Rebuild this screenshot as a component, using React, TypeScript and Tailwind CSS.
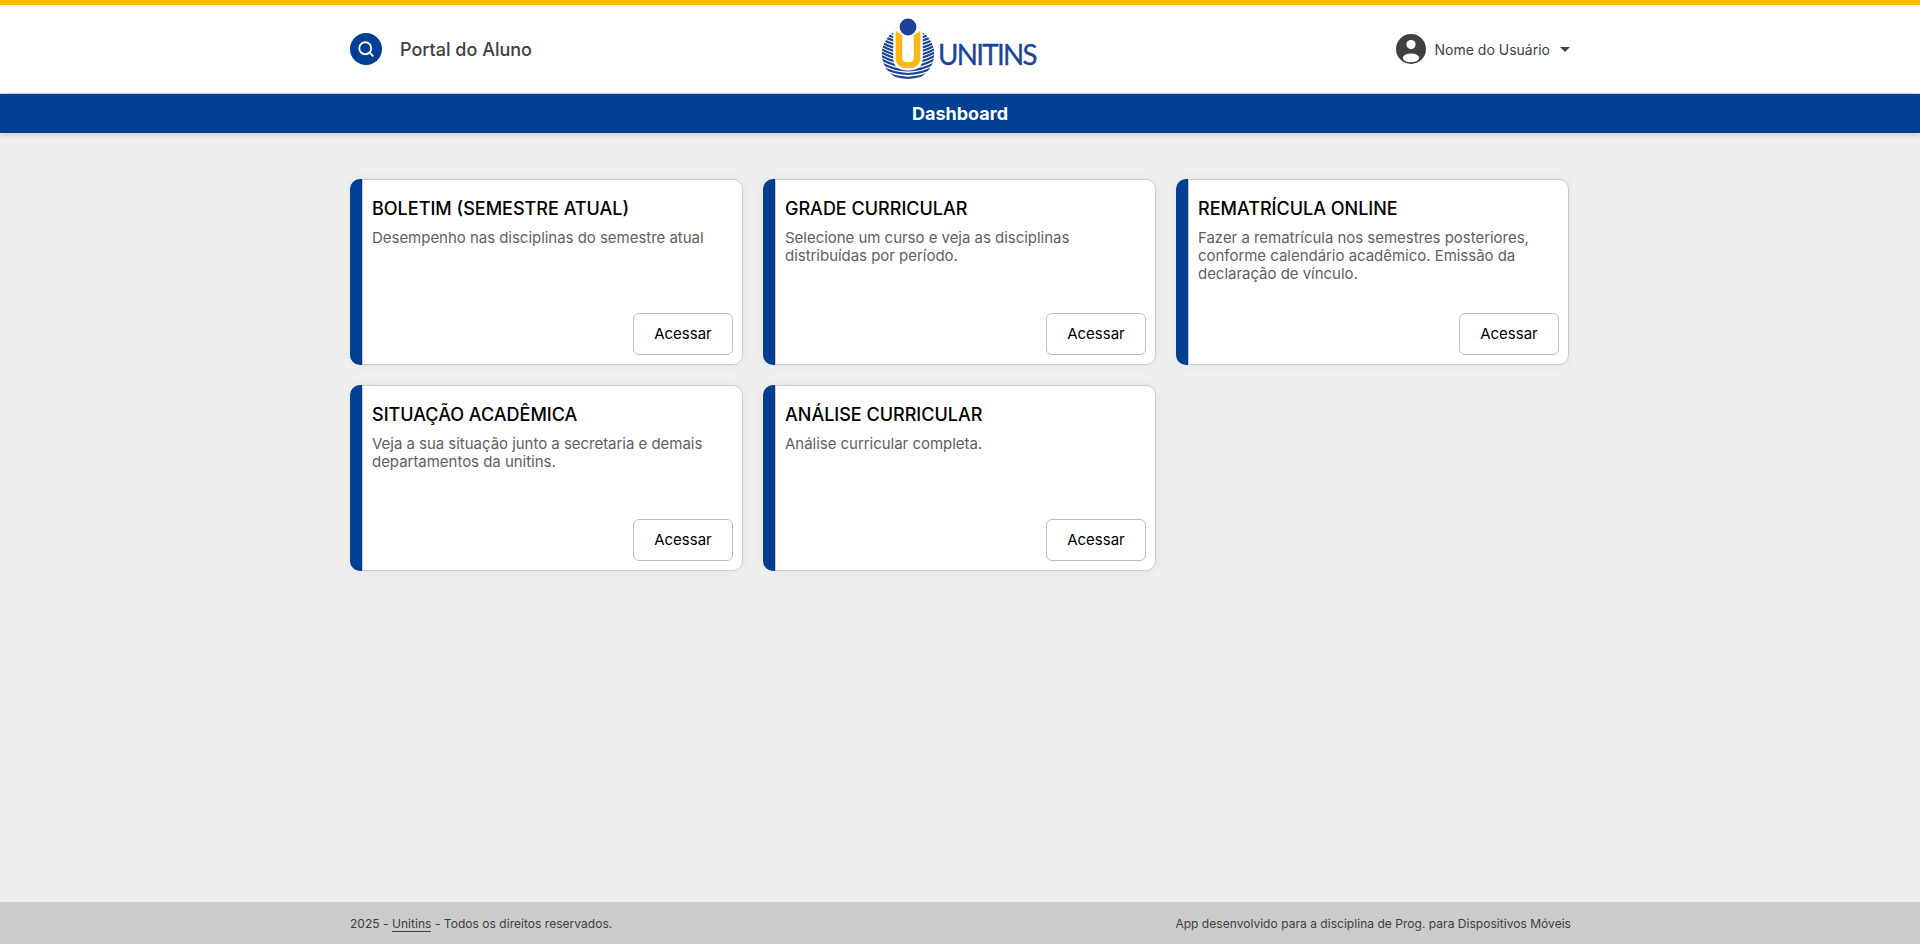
import { Search } from "lucide-react";

const cards = [
  { title: "BOLETIM (SEMESTRE ATUAL)", text: "Desempenho nas disciplinas do semestre atual" },
  { title: "GRADE CURRICULAR", text: "Selecione um curso e veja as disciplinas distribuídas por período." },
  {
    title: "REMATRÍCULA ONLINE",
    text: "Fazer a rematrícula nos semestres posteriores, conforme calendário acadêmico. Emissão da declaração de vínculo.",
  },
  { title: "SITUAÇÃO ACADÊMICA", text: "Veja a sua situação junto a secretaria e demais departamentos da unitins." },
  { title: "ANÁLISE CURRICULAR", text: "Análise curricular completa." },
];

const stripes = [19, 22.4, 25.8, 29.2, 32.6, 36, 39.4, 42.8, 46.2, 49.8, 53.4, 57, 60.8];

function Logo() {
  return (
    <svg className="overflow-visible" width="160" height="66" viewBox="0 0 160 66" aria-label="Unitins">
      <defs>
        <clipPath id="globe">
          <circle cx="28" cy="38" r="26.2" />
        </clipPath>
      </defs>
      <g clipPath="url(#globe)" fill="none" stroke="#1c4595" strokeWidth="2.2">
        {stripes.map((y) => (
          <path key={y} d={`M0 ${y - 7}Q28 ${y + 9} 56 ${y - 7}`} />
        ))}
      </g>
      <path d="M13.2 8V42C13.2 50.5 18.5 54.5 28 54.5S42.8 50.5 42.8 42V8Z" fill="#fff" />
      <path
        d="M15.6 14.8L22.2 19V42Q22.2 46.3 28 46.3T33.8 42V19L40.4 14.8V41.5Q40.4 52.2 28 52.2T15.6 41.5Z"
        fill="#fdb813"
      />
      <circle cx="28" cy="11" r="10" fill="#fff" />
      <circle cx="28" cy="11" r="8.4" fill="#1c4595" />
      <text
        x="58"
        y="49"
        textLength="98"
        lengthAdjust="spacingAndGlyphs"
        fill="#1c4595"
        stroke="#1c4595"
        strokeWidth="0.3"
        className="font-['Lato',sans-serif] text-[28px] tracking-[-1.7px]"
      >
        UNITINS
      </text>
    </svg>
  );
}

export default function App() {
  return (
    <div className="flex min-h-screen flex-col bg-[#efefef] font-['Inter',sans-serif]">
      <header className="h-[94px] border-t-[5px] border-b border-t-[#fdb813] border-b-[#d5d8df] bg-white">
        <div className="mx-auto grid h-full w-[1220px] grid-cols-3 items-center">
          <div className="flex items-center">
            <button className="flex size-8 items-center justify-center rounded-full bg-[#003f91] text-white">
              <Search size={18} strokeWidth={2.4} />
            </button>
            <span className="ml-[18px] pt-0.5 text-lg font-medium text-[#404040]">Portal do Aluno</span>
          </div>
          <div className="flex justify-center">
            <Logo />
          </div>
          <div className="flex items-center justify-end text-[#404040]">
            <svg width="30" height="30" viewBox="0 0 30 30">
              <circle cx="15" cy="15" r="15" fill="#404040" />
              <circle cx="15" cy="10.6" r="4.6" fill="#fff" />
              <ellipse cx="15" cy="23.8" rx="8.2" ry="4.4" fill="#fff" />
            </svg>
            <span className="ml-[9px] pt-0.5 text-sm">Nome do Usuário</span>
            <svg className="ml-[10px]" width="10" height="5" viewBox="0 0 10 5">
              <path d="M0 0H10L5 5Z" fill="#404040" />
            </svg>
          </div>
        </div>
      </header>
      <div className="flex h-[39px] items-center justify-center bg-[#003f91] text-lg font-bold text-white shadow-[0_2px_6px_rgba(0,0,0,0.15)]">
        Dashboard
      </div>
      <main className="mx-auto mt-[46px] grid w-[1220px] grid-cols-[repeat(3,393px)] gap-5">
        {cards.map((card) => (
          <section
            key={card.title}
            className="flex h-[186px] rounded-[10px] shadow-[0_0_10px_rgba(0,0,0,0.06)]"
          >
            <div className="w-3 shrink-0 rounded-l-[10px] bg-[#003f91]" />
            <div className="flex min-w-0 flex-1 flex-col rounded-r-[10px] border border-[#cccccc] bg-white pt-[18px] pr-[9px] pb-[9px] pl-[9px]">
              <h2 className="text-lg leading-[22px] font-medium text-black">{card.title}</h2>
              <p className="mt-[9px] text-[15px] leading-[18px] tracking-[-0.03px] text-[#5f5f5f]">{card.text}</p>
              <button className="mt-auto h-[42px] w-[100px] self-end rounded-md border border-[#bfbfbf] bg-white text-[15px] text-black">
                Acessar
              </button>
            </div>
          </section>
        ))}
      </main>
      <footer className="mt-auto h-[42px] bg-[#cccccc] pt-px pl-px text-xs tracking-[0.035px] text-[#404040]">
        <div className="mx-auto flex h-full w-[1221px] items-center justify-between">
          <p>
            2025 - <a className="border-b border-[#404040]">Unitins</a> - Todos os direitos reservados.
          </p>
          <p>App desenvolvido para a disciplina de Prog. para Dispositivos Móveis</p>
        </div>
      </footer>
    </div>
  );
}
